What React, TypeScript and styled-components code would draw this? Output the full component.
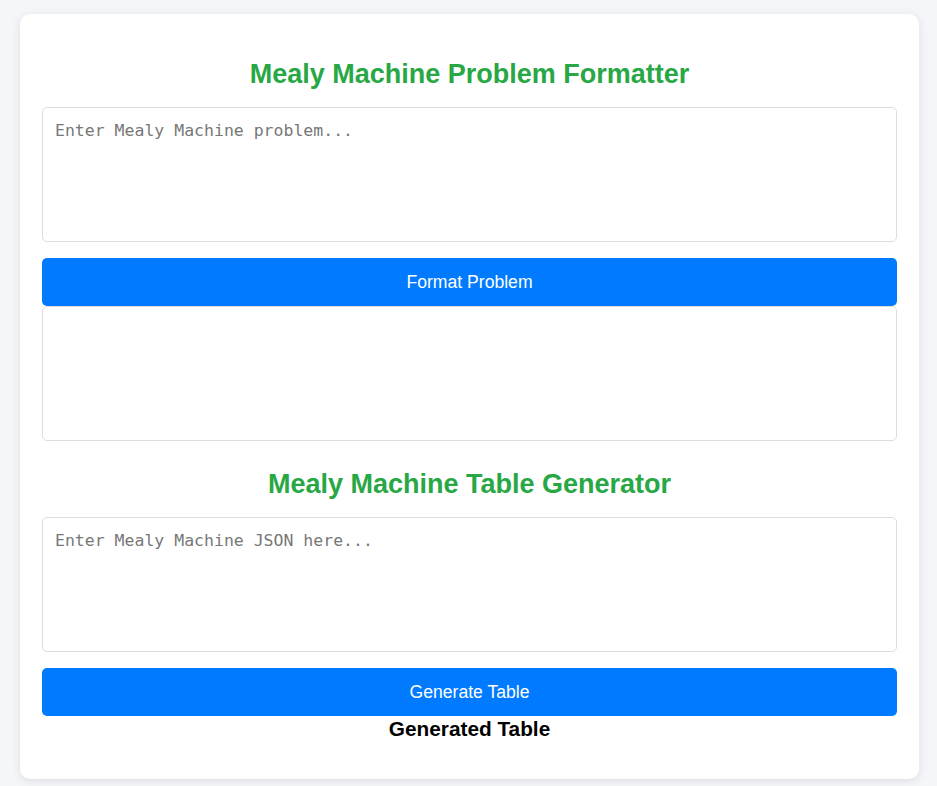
import styled, { createGlobalStyle } from 'styled-components'

const GlobalStyle = createGlobalStyle`
  body {
    margin: 0;
    background: #f4f6f9;
    font-family: "Liberation Sans", Arial, sans-serif;
  }
`

const Card = styled.div`
  box-sizing: border-box;
  margin: 14px 18px 8px 20px;
  padding: 22px;
  background: #fff;
  border-radius: 10px;
  box-shadow: 0 2px 10px rgba(0, 0, 0, 0.1);
  display: flex;
  flex-direction: column;
`

const Title = styled.h2<{ $top: number }>`
  margin: ${(p) => p.$top}px 0 18px;
  color: #28a745;
  font-size: 27px;
  line-height: 30px;
  text-align: center;
  font-weight: bold;
`

const Input = styled.textarea`
  display: block;
  height: 135px;
  box-sizing: border-box;
  padding: 13px 12px 12px;
  border: 1px solid #ddd;
  border-radius: 5px;
  font-family: "DejaVu Sans Mono", "Liberation Mono", monospace;
  font-size: 16.5px;
  resize: none;
  outline: none;

  &::placeholder {
    color: #777;
  }
`

const Button = styled.button`
  margin-top: 16px;
  height: 48px;
  border: none;
  border-radius: 5px;
  background: #007bff;
  color: #fff;
  font-family: "Liberation Sans", Arial, sans-serif;
  font-size: 17.6px;
  cursor: pointer;
`

const Output = styled.div`
  height: 135px;
  box-sizing: border-box;
  border: 1px solid #ddd;
  border-radius: 5px;
`

const TableTitle = styled.h3`
  margin: 1px 0 16px;
  font-size: 20.8px;
  line-height: 24px;
  text-align: center;
  color: #000;
`

export default function App() {
  return (
    <>
      <GlobalStyle />
      <Card>
        <Title $top={23}>Mealy Machine Problem Formatter</Title>
        <Input placeholder="Enter Mealy Machine problem..." />
        <Button>Format Problem</Button>
        <Output />
        <Title $top={28}>Mealy Machine Table Generator</Title>
        <Input placeholder="Enter Mealy Machine JSON here..." />
        <Button>Generate Table</Button>
        <TableTitle>Generated Table</TableTitle>
      </Card>
    </>
  )
}
